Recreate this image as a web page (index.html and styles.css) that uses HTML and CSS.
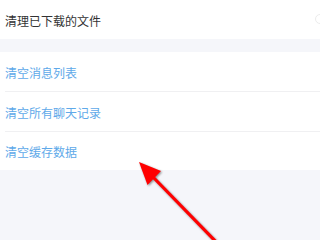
FILE: index.html
```html
<!DOCTYPE html>
<html lang="zh-CN">
<head>
<meta charset="utf-8">
<title>清理</title>
<link rel="stylesheet" href="styles.css">
</head>
<body>
<div class="page">
  <section class="group group-top">
    <div class="row"><span class="label">清理已下载的文件</span></div>
    <span class="edge-mark"></span>
  </section>
  <section class="group">
    <div class="row sep"><span class="label blue">清空消息列表</span></div>
    <div class="row sep"><span class="label blue">清空所有聊天记录</span></div>
    <div class="row"><span class="label blue">清空缓存数据</span></div>
  </section>
  <svg class="arrow" width="320" height="240" viewBox="0 0 320 240" aria-hidden="true">
    <line x1="152" y1="176" x2="224" y2="250" stroke="#ff0000" stroke-width="3.2"/>
    <polygon points="139,162 161,171 147.5,185" fill="#ff0000"/>
  </svg>
</div>
</body>
</html>
```
FILE: styles.css
```css
html, body {
  margin: 0;
  padding: 0;
}
body {
  background: #f5f6fa;
  font-family: "Noto Sans CJK SC", "Noto Sans", sans-serif;
  font-size: 12px;
}
.page {
  position: relative;
  width: 320px;
  height: 240px;
  overflow: hidden;
}
.group {
  background: #ffffff;
  display: flex;
  flex-direction: column;
  margin-top: 13px;
}
.group-top {
  margin-top: 0;
  position: relative;
}
.group-top .row {
  height: 39px;
}
.row {
  height: 40px;
  margin-left: 5px;
  display: flex;
  align-items: center;
  box-sizing: border-box;
}
.row:last-child {
  height: 38px;
}
.group-top .row:last-child {
  height: 39px;
}
.row.sep {
  border-bottom: 1px solid #f0f0f2;
}
.label {
  color: #333333;
  line-height: 1;
  padding-top: 2px;
}
.label.blue {
  color: #5ea9e9;
}
.edge-mark {
  position: absolute;
  right: -5px;
  top: 14px;
  width: 8px;
  height: 8px;
  border: 1px solid #ececec;
  border-radius: 50%;
}
.arrow {
  position: absolute;
  left: 0;
  top: 0;
  filter: drop-shadow(1px 1px 1px rgba(0, 0, 0, 0.45));
}
```
